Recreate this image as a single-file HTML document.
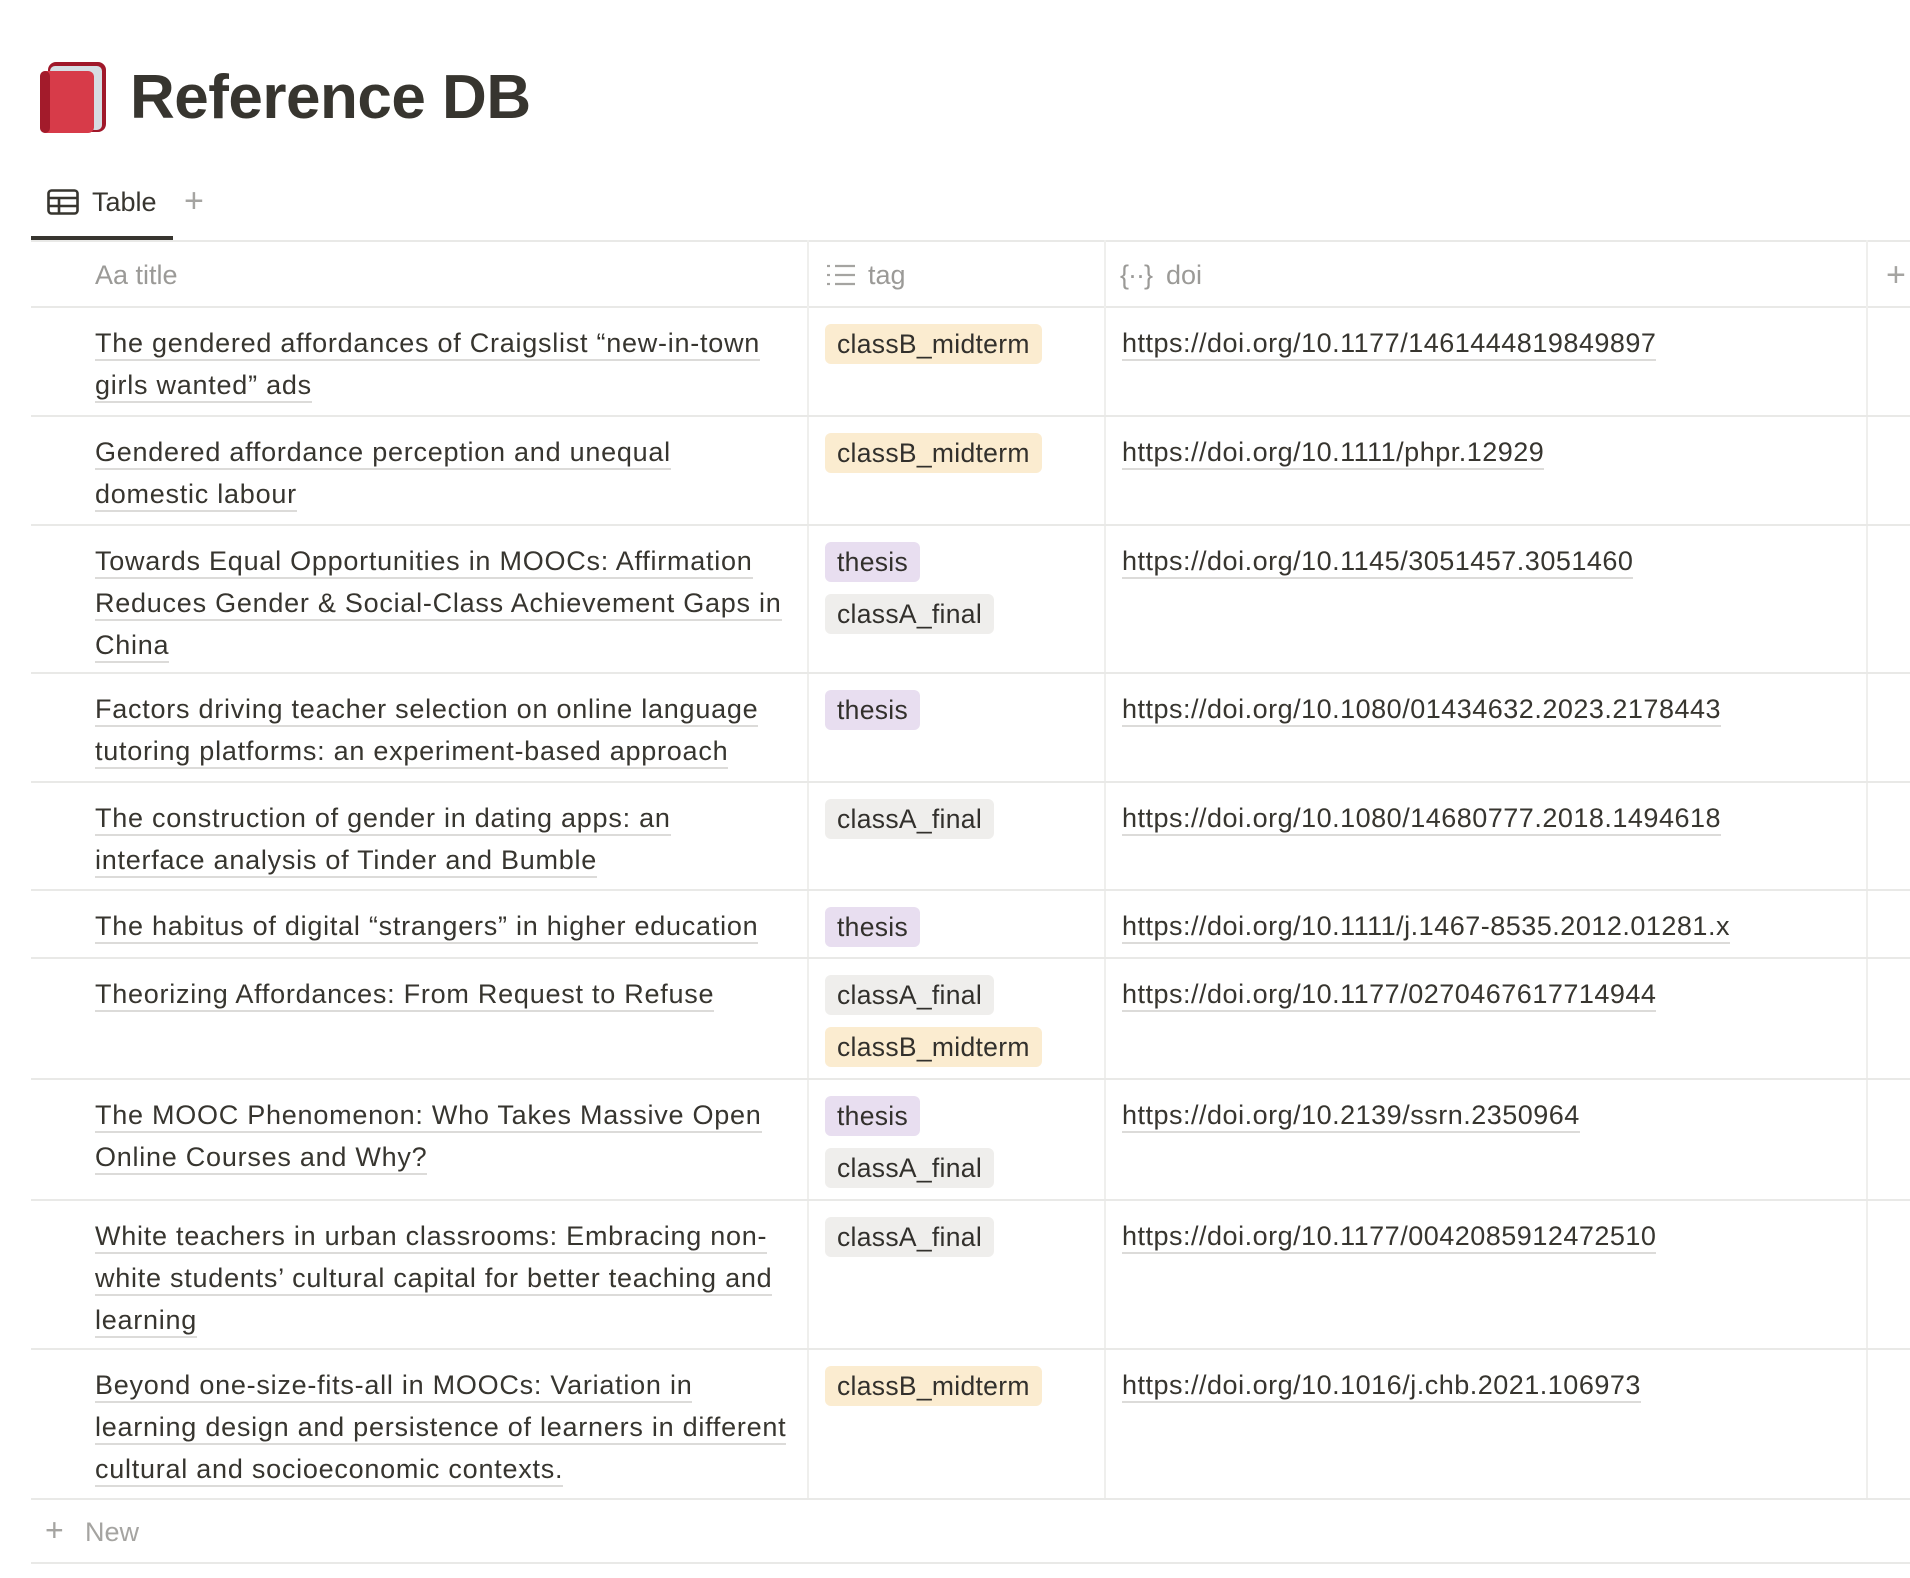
<!DOCTYPE html>
<html><head><meta charset="utf-8"><style>
*{margin:0;padding:0;box-sizing:border-box}
body{width:1910px;height:1578px;background:#fff;font-family:"Liberation Sans",sans-serif;color:#37352f;position:relative;overflow:hidden}
.abs{position:absolute}
h1{position:absolute;left:130px;top:62px;font-size:62px;font-weight:bold;letter-spacing:-0.5px;color:#37352f}
.hline{position:absolute;left:31px;right:0;height:2px;background:#e9e9e7}
.vline{position:absolute;width:2px;background:#efefed}
.row{position:absolute;left:31px;right:0}
.t{position:absolute;left:64px;top:15px;font-size:27px;letter-spacing:0.75px;line-height:42px;width:760px;white-space:nowrap}
.t span{border-bottom:2px solid #dcdbd9;padding-bottom:1px}
.tags{position:absolute;left:794px;top:17px}
.pill{display:block;width:max-content;height:40px;line-height:40px;padding:0 12px;border-radius:6px;font-size:26.5px;letter-spacing:0.3px;margin-bottom:12px;color:#32302c}
.y{background:#fbecd0}.p{background:#e8def0}.g{background:#efeeec}
.d{position:absolute;left:1091px;top:15px;font-size:27px;letter-spacing:0.5px;line-height:42px;white-space:nowrap}
.d span{border-bottom:2px solid #dcdbd9;padding-bottom:1px}
.hd{position:absolute;top:257px;font-size:27px;color:#9b9a97;line-height:36px}
</style></head><body>
<svg class="abs" style="left:38px;top:62px" width="70" height="72" viewBox="0 0 70 72">
<rect x="10" y="0" width="58" height="70" rx="8" fill="#a0182a"/>
<rect x="12" y="4" width="52" height="64" rx="5" fill="#d6dde3"/>
<rect x="2" y="9" width="54" height="62" rx="6" fill="#d73b49"/>
<rect x="2" y="9" width="10" height="62" rx="5" fill="#a31b2b"/>
</svg>
<h1>Reference DB</h1>
<svg class="abs" style="left:47px;top:189px" width="32" height="26" viewBox="0 0 32 26" fill="none" stroke="#37352f" stroke-width="2.6"><rect x="1.5" y="1.5" width="29" height="23" rx="3"/><line x1="1.5" y1="9" x2="30.5" y2="9"/><line x1="1.5" y1="17" x2="30.5" y2="17"/><line x1="12" y1="9" x2="12" y2="24.5"/></svg>
<div class="abs" style="left:92px;top:184px;font-size:27px;line-height:36px;color:#37352f">Table</div>
<div class="abs" style="left:184px;top:182px;font-size:34px;color:#a5a4a1;font-weight:300">+</div>
<div class="abs" style="left:31px;top:236px;width:142px;height:4px;background:#37352f"></div>
<div class="hline" style="top:240px"></div>
<div class="hd" style="left:95px">Aa title</div>
<svg class="abs" style="left:827px;top:264px" width="28" height="22" viewBox="0 0 28 22" stroke="#a5a4a1" stroke-width="2.2"><line x1="0" y1="2" x2="3" y2="2"/><line x1="8" y1="2" x2="28" y2="2"/><line x1="0" y1="11" x2="3" y2="11"/><line x1="8" y1="11" x2="28" y2="11"/><line x1="0" y1="20" x2="3" y2="20"/><line x1="8" y1="20" x2="28" y2="20"/></svg>
<div class="hd" style="left:868px">tag</div>
<div class="hd" style="left:1120px;letter-spacing:-1px">{··}</div>
<div class="hd" style="left:1166px">doi</div>
<div class="abs" style="left:1886px;top:256px;font-size:34px;color:#a5a4a1">+</div>
<div class="hline" style="top:306px"></div>
<div class="vline" style="left:807px;top:240px;height:1259px"></div>
<div class="vline" style="left:1104px;top:240px;height:1259px"></div>
<div class="vline" style="left:1866px;top:240px;height:1259px"></div>

<div class="row" style="top:307px"><div class="t"><span>The gendered affordances of Craigslist “new-in-town</span><br><span>girls wanted” ads</span></div><div class="tags"><span class="pill y">classB_midterm</span></div><div class="d"><span>https://doi.org/10.1177/1461444819849897</span></div></div>
<div class="hline" style="top:415px"></div>
<div class="row" style="top:416px"><div class="t"><span>Gendered affordance perception and unequal</span><br><span>domestic labour</span></div><div class="tags"><span class="pill y">classB_midterm</span></div><div class="d"><span>https://doi.org/10.1111/phpr.12929</span></div></div>
<div class="hline" style="top:524px"></div>
<div class="row" style="top:525px"><div class="t"><span>Towards Equal Opportunities in MOOCs: Affirmation</span><br><span>Reduces Gender &amp; Social-Class Achievement Gaps in</span><br><span>China</span></div><div class="tags"><span class="pill p">thesis</span><span class="pill g">classA_final</span></div><div class="d"><span>https://doi.org/10.1145/3051457.3051460</span></div></div>
<div class="hline" style="top:672px"></div>
<div class="row" style="top:673px"><div class="t"><span>Factors driving teacher selection on online language</span><br><span>tutoring platforms: an experiment-based approach</span></div><div class="tags"><span class="pill p">thesis</span></div><div class="d"><span>https://doi.org/10.1080/01434632.2023.2178443</span></div></div>
<div class="hline" style="top:781px"></div>
<div class="row" style="top:782px"><div class="t"><span>The construction of gender in dating apps: an</span><br><span>interface analysis of Tinder and Bumble</span></div><div class="tags"><span class="pill g">classA_final</span></div><div class="d"><span>https://doi.org/10.1080/14680777.2018.1494618</span></div></div>
<div class="hline" style="top:889px"></div>
<div class="row" style="top:890px"><div class="t"><span>The habitus of digital “strangers” in higher education</span></div><div class="tags"><span class="pill p">thesis</span></div><div class="d"><span>https://doi.org/10.1111/j.1467-8535.2012.01281.x</span></div></div>
<div class="hline" style="top:957px"></div>
<div class="row" style="top:958px"><div class="t"><span>Theorizing Affordances: From Request to Refuse</span></div><div class="tags"><span class="pill g">classA_final</span><span class="pill y">classB_midterm</span></div><div class="d"><span>https://doi.org/10.1177/0270467617714944</span></div></div>
<div class="hline" style="top:1078px"></div>
<div class="row" style="top:1079px"><div class="t"><span>The MOOC Phenomenon: Who Takes Massive Open</span><br><span>Online Courses and Why?</span></div><div class="tags"><span class="pill p">thesis</span><span class="pill g">classA_final</span></div><div class="d"><span>https://doi.org/10.2139/ssrn.2350964</span></div></div>
<div class="hline" style="top:1199px"></div>
<div class="row" style="top:1200px"><div class="t"><span>White teachers in urban classrooms: Embracing non-</span><br><span>white students’ cultural capital for better teaching and</span><br><span>learning</span></div><div class="tags"><span class="pill g">classA_final</span></div><div class="d"><span>https://doi.org/10.1177/0042085912472510</span></div></div>
<div class="hline" style="top:1348px"></div>
<div class="row" style="top:1349px"><div class="t"><span>Beyond one-size-fits-all in MOOCs: Variation in</span><br><span>learning design and persistence of learners in different</span><br><span>cultural and socioeconomic contexts.</span></div><div class="tags"><span class="pill y">classB_midterm</span></div><div class="d"><span>https://doi.org/10.1016/j.chb.2021.106973</span></div></div>
<div class="hline" style="top:1498px"></div>
<div class="abs" style="left:45px;top:1512px;font-size:32px;color:#a5a4a1">+</div>
<div class="abs" style="left:85px;top:1514px;font-size:27px;line-height:36px;color:#a5a4a1">New</div>
<div class="hline" style="top:1562px"></div>
</body></html>
